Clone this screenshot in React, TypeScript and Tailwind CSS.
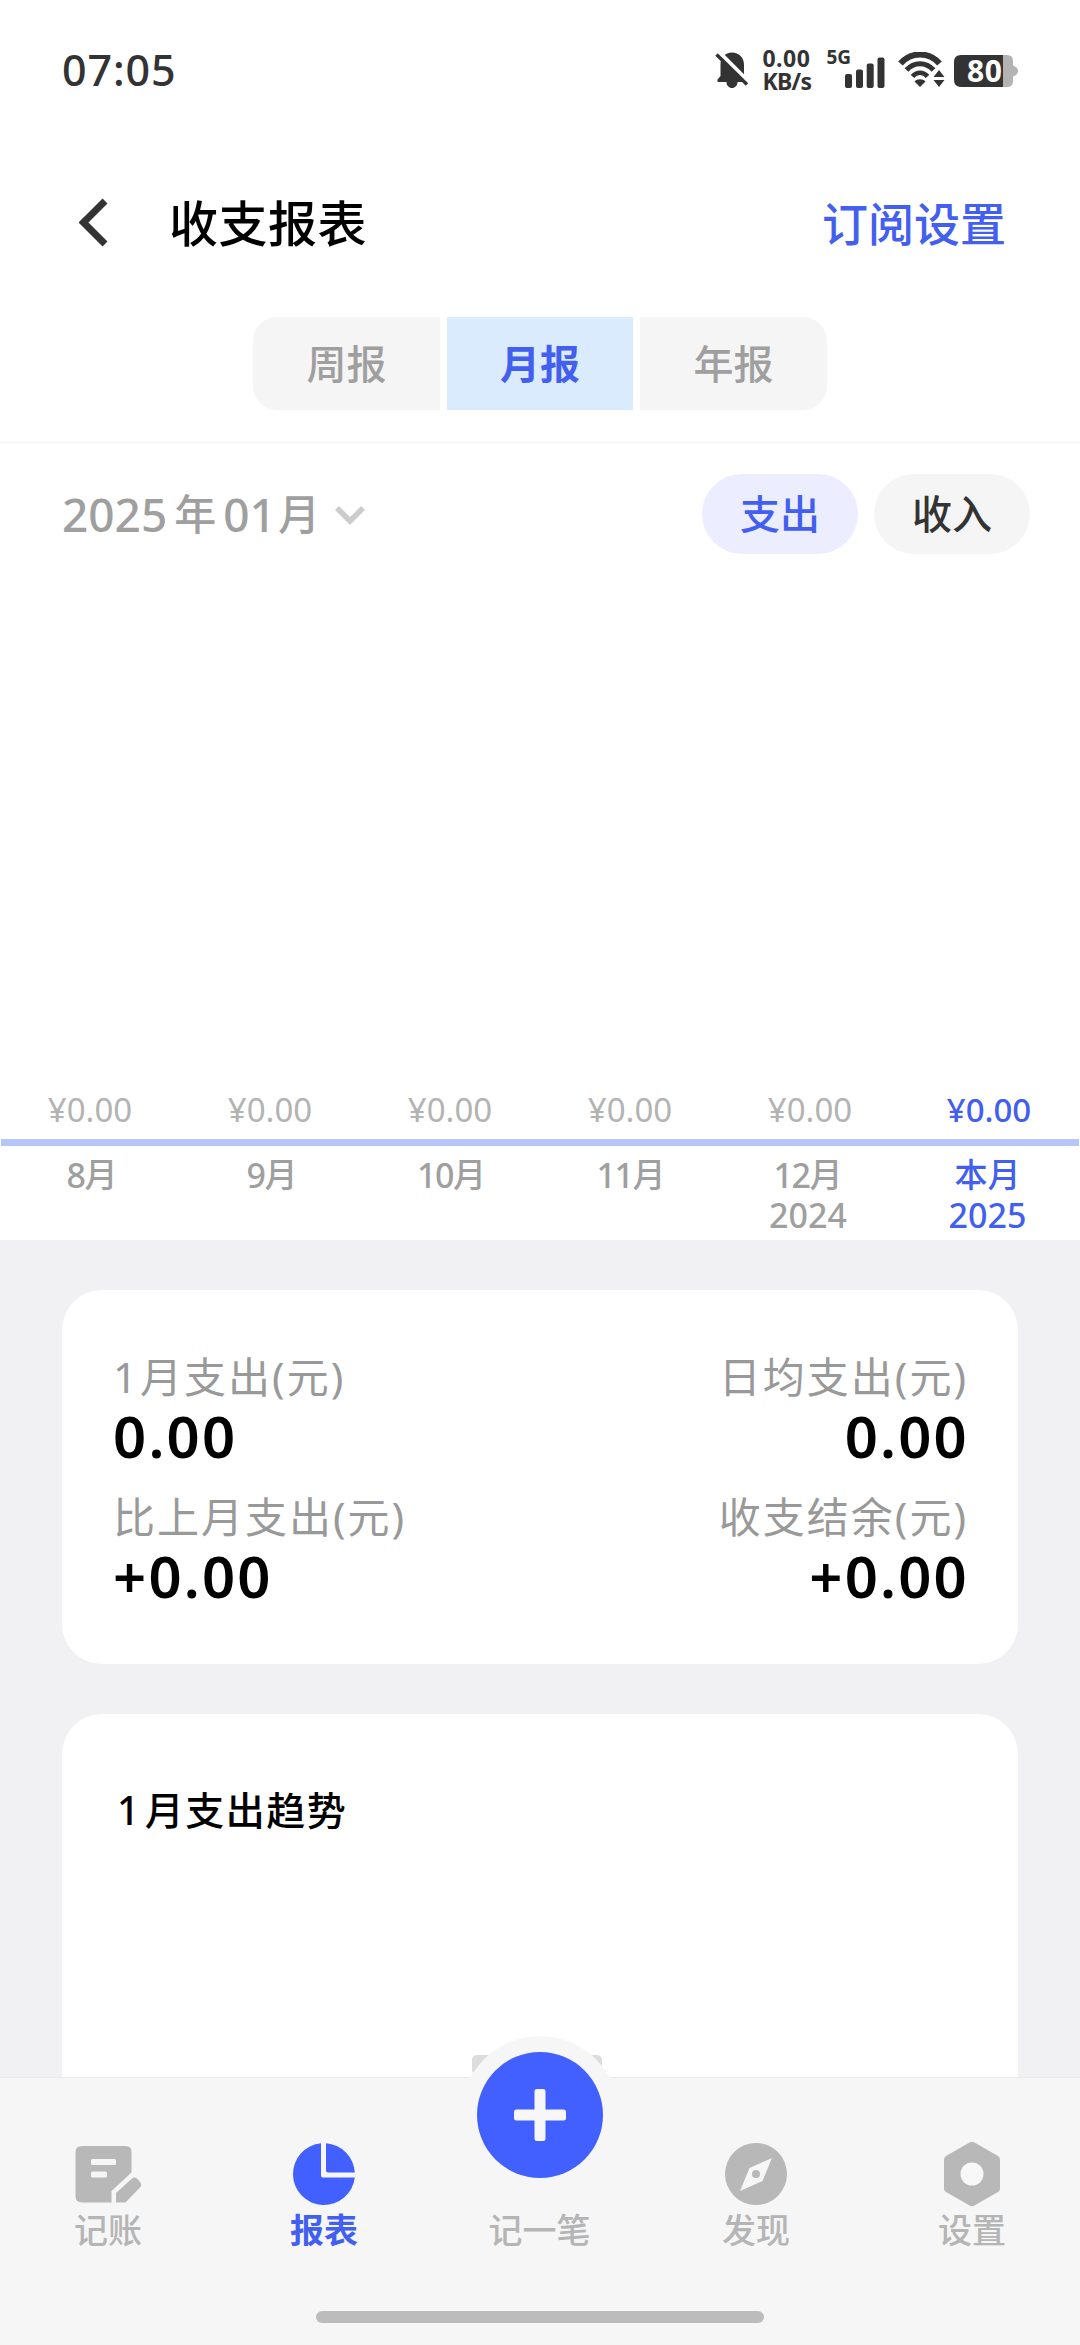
import React from 'react';

const months = [
  { num: '8', unit: '月', year: '', shift: 'pl-[4px]' },
  { num: '9', unit: '月', year: '', shift: 'pl-[4px]' },
  { num: '10', unit: '月', year: '', shift: 'pl-[3px]' },
  { num: '11', unit: '月', year: '', shift: 'pl-[2px]' },
  { num: '12', unit: '月', year: '2024', shift: 'pr-[4px]' },
  { num: '', unit: '本月', year: '2025', shift: 'pr-[5px]' },
];

function StatusBar() {
  return (
    <div className="flex h-[140px] items-center justify-between pl-[62px] pr-[61px] text-[#333]">
      <div className="text-[43px] font-medium leading-[60px] tracking-[0.9px]">07:05</div>
      <div className="flex h-[40px]">
        <svg className="mt-[1px] h-[38px] w-[34px]" viewBox="0 0 34 38" fill="none">
          <path d="M17 1.5C24 1.5 29 6.5 29 13.5V25L32 28.5V31H22.5C22.5 34.5 20 37 17 37C14 37 11.5 34.5 11.5 31H2.500V28.500L5.500 25V13.500C5.500 6.500 10 1.500 17 1.500Z" fill="#333" />
          <path d="M3 0L35 32" stroke="#fff" strokeWidth="4" />
          <path d="M1.500 3.500L32 33.500" stroke="#333" strokeWidth="3.400" />
        </svg>
        <div className="-mt-[3px] ml-[13px] w-[51px] text-[23px] font-bold leading-[23px]">
          <div className="tracking-[0.5px]">0.00</div>
          <div className="tracking-[-0.7px]">KB/s</div>
        </div>
        <div className="-mt-[1px] ml-[13px] text-[19px] font-bold leading-[16px]">5G</div>
        <svg className="-ml-[6px] mt-[7px] h-[33px] w-[40px]" viewBox="0 0 40 33" fill="#333">
          <rect x="0" y="17" width="7" height="14" rx="2" />
          <rect x="11" y="12.500" width="7" height="18.500" rx="2" />
          <rect x="21.700" y="6.500" width="7" height="24.500" rx="2" />
          <rect x="32.500" y="0.500" width="7" height="30.500" rx="2" />
        </svg>
        <svg className="ml-[13px] mt-[2px] h-[36px] w-[48px]" viewBox="0 0 48 36" fill="none" stroke="#333">
          <path d="M2.500 11.500C13 -0.500 31 -0.500 41.500 11.500" strokeWidth="6" />
          <path d="M8.500 18C16 9.500 28 9.500 35.500 18" strokeWidth="5" />
          <path d="M14.500 24.500C18.500 19.500 25.500 19.500 29.500 24.500" strokeWidth="4.500" />
          <path d="M16.500 29.500C19 26.500 25 26.500 27.500 29.500L22 35Z" fill="#333" stroke="none" />
          <path d="M41 18L46.500 25H35.500Z M41 35L46.500 28H35.500Z" fill="#333" stroke="none" />
        </svg>
        <div className="relative ml-[8px] mt-[5px] h-[32px] w-[65px]">
          <svg className="h-[32px] w-[65px]" viewBox="0 0 65 32">
            <path d="M49 0H53Q59 0 59 6V9.500Q59 10.500 60 11Q64 12.500 64 16Q64 19.500 60 21Q59 21.500 59 22.500V26Q59 32 53 32H49Z" fill="#b3b3b3" />
            <path d="M7 0H49V32H7Q0 32 0 25V7Q0 0 7 0Z" fill="#333" />
          </svg>
          <span className="absolute left-[13px] top-0 text-[30px] font-bold leading-[31px] tracking-[0.5px] text-white">80</span>
        </div>
      </div>
    </div>
  );
}

function Header() {
  return (
    <header className="flex h-[166px] items-center pl-[79px] pr-[74px]">
      <svg className="h-[50px] w-[30px]" viewBox="0 0 30 50" fill="none">
        <path d="M26 3L4.500 24.500L26 46" stroke="#333" strokeWidth="7" />
      </svg>
      <h1 className="ml-[60px] text-[49px] font-medium leading-[60px] tracking-[0.5px] text-black">收支报表</h1>
      <div className="ml-auto text-[46px] font-medium leading-[60px] text-[#435ff0]">订阅设置</div>
    </header>
  );
}

function Segments() {
  return (
    <div className="mt-[11px] flex h-[93px] justify-center gap-[7px] text-[40px] font-medium leading-[93px] text-[#9f9f9f]">
      <div className="w-[187px] rounded-l-[24px] bg-[#f5f5f5] text-center">周报</div>
      <div className="w-[186px] bg-[#dbebfe] text-center font-bold text-[#435ff0]">月报</div>
      <div className="w-[187px] rounded-r-[24px] bg-[#f5f5f5] text-center">年报</div>
    </div>
  );
}

function Filters() {
  return (
    <div className="mt-[30px] flex h-[80px] items-center pl-[62px] pr-[50px]">
      <div className="flex items-center font-medium leading-[60px] text-[#9f9f9f]">
        <span className="text-[46px]">2025</span>
        <span className="ml-[7px] text-[42px]">年</span>
        <span className="ml-[7px] text-[46px]">01</span>
        <span className="ml-[2px] text-[42px]">月</span>
      </div>
      <svg className="ml-[14px] mt-[4px] h-[22px] w-[32px]" viewBox="0 0 32 22" fill="none">
        <path d="M3 3L16 16L29 3" stroke="#cccccc" strokeWidth="5.500" />
      </svg>
      <div className="ml-auto flex gap-[16px] text-center text-[40px] font-medium leading-[80px]">
        <div className="w-[156px] rounded-full bg-[#ecedff] text-[#435ff0]">支出</div>
        <div className="w-[156px] rounded-full bg-[#f5f5f5] text-[#333]">收入</div>
      </div>
    </div>
  );
}

function Chart() {
  return (
    <div className="flex h-[686px] flex-col justify-end pb-[5px]">
      <div className="grid grid-cols-6 text-center text-[33px] leading-[40px] text-[#b3b3b3]">
        {months.map((m, i) => (
          <div key={i} className={i === 5 ? 'pr-[2px] font-medium text-[#435ff0]' : ''}>¥0.00</div>
        ))}
      </div>
      <div className="mx-[1px] mt-[9px] h-[7px] bg-[#b6c5fa]" />
      <div className="mt-[9px] grid grid-cols-6 text-center font-medium leading-[40px] text-[#9f9f9f]">
        {months.map((m, i) => (
          <div key={i} className={i === 5 ? 'h-[80px] text-[#435ff0]' : 'h-[80px]'}>
            <div className={m.shift}>
              <div className="flex justify-center">
                <span className="text-[34px] tracking-[-1.5px]">{m.num}</span>
                <span className="text-[33px]">{m.unit}</span>
              </div>
              <div className="text-[34px]">{m.year}</div>
            </div>
          </div>
        ))}
      </div>
    </div>
  );
}

function Stat({ num, label, value, right = false }: { num?: string; label: string; value: string; right?: boolean }) {
  return (
    <div className={right ? 'text-right' : ''}>
      <div className={right ? '-mr-[1px] text-[42px] leading-[60px] tracking-[2px] text-[#999]' : 'text-[42px] leading-[60px] tracking-[2px] text-[#999]'}>
        {num && <span className="mr-[1px]">{num}</span>}
        {label}
      </div>
      <div className={right ? '-mr-[2px] text-[58px] font-semibold leading-[58px] tracking-[2.200px] text-black' : 'text-[58px] font-semibold leading-[58px] tracking-[2.200px] text-black'}>
        {value}
      </div>
    </div>
  );
}

const navColor = '#b8b8b8';

function Nav() {
  return (
    <nav className="relative z-10 h-[268px] shrink-0 border-t border-[#ebebeb] bg-[#f6f6f6]">
      <div className="absolute -top-[23px] left-[472px] -z-10 h-[20px] w-[130px] rounded-[5px] bg-[#dcdcdc]" />
      <div className="absolute -top-[42px] left-[461px] flex h-[158px] w-[158px] items-center justify-center rounded-full bg-[#f6f6f6]">
        <div className="flex h-[126px] w-[126px] items-center justify-center rounded-full bg-[#4160ff]">
          <svg className="h-[52px] w-[52px]" viewBox="0 0 52 52" fill="#f7f7f7">
            <rect x="0" y="20.500" width="52" height="11" rx="2.500" />
            <rect x="20.500" y="0" width="11" height="52" rx="2.500" />
          </svg>
        </div>
      </div>
      <div className="relative grid grid-cols-5 pt-[62px] text-center text-[34px] font-medium leading-[44px] text-[#b5b5b5]">
        <div>
          <svg className="mx-auto h-[68px] w-[68px]" viewBox="0 0 68 68" fill={navColor}>
            <path d="M8 6H52Q57.500 6 57.500 12V32.500L37.500 51V62.500H8Q1.500 62.500 1.500 56V12Q1.500 6 8 6Z" />
            <path d="M42 62.500V53L58 38.500Q60.500 36.500 63 38.500L66 42Q68.500 45 66 47.500L51.500 62.500Z" />
            <rect x="17" y="19" width="25" height="6" rx="1.500" fill="#f6f6f6" />
            <rect x="17" y="31.500" width="16" height="6" rx="1.500" fill="#f6f6f6" />
          </svg>
          <div>记账</div>
        </div>
        <div className="font-bold text-[#435ff0]">
          <svg className="mx-auto h-[68px] w-[68px]" viewBox="0 0 68 68" fill="#4160ff">
            <path d="M31 3.200V35.500Q31 37.500 33 37.500H64.800A31 31 0 1 1 31 3.200Z" />
            <path d="M36 3.200A31 31 0 0 1 64.800 32.500H38Q36 32.500 36 30.500Z" />
          </svg>
          <div>报表</div>
        </div>
        <div className="pr-[1px] pt-[68px]">记一笔</div>
        <div>
          <svg className="mx-auto h-[68px] w-[68px]" viewBox="0 0 68 68" fill={navColor}>
            <circle cx="34" cy="34" r="31" />
            <path d="M50 18L40.500 41L18 51L27.500 28Z" fill="#f6f6f6" />
            <circle cx="34" cy="34" r="4" />
          </svg>
          <div>发现</div>
        </div>
        <div>
          <svg className="mx-auto h-[68px] w-[68px]" viewBox="0 0 68 68" fill={navColor}>
            <path d="M31.500 2.500Q34 1 36.500 2.500L60 16Q62 17.200 62 19.500V48.500Q62 50.800 60 52L36.500 65.500Q34 67 31.500 65.500L8 52Q6 50.800 6 48.500V19.500Q6 17.200 8 16Z" />
            <circle cx="34" cy="34" r="11.500" fill="#f8f8f8" />
          </svg>
          <div>设置</div>
        </div>
      </div>
      <div className="mx-auto mt-[59px] h-[12px] w-[448px] rounded-full bg-[#bcbcbc]" />
    </nav>
  );
}

export default function App() {
  return (
    <div className="flex h-[2345px] w-[1080px] flex-col overflow-hidden bg-[#f1f1f3] font-['Noto_Sans','Noto_Sans_CJK_SC',sans-serif]">
      <div className="flex min-h-0 flex-1 flex-col overflow-hidden">
        <div className="shrink-0 bg-white">
          <StatusBar />
          <Header />
          <Segments />
          <div className="mt-[31px] h-[3px] bg-[#f8f8f8]" />
          <Filters />
          <Chart />
        </div>
        <section className="mx-[62px] mt-[50px] grid h-[374px] shrink-0 grid-cols-2 content-start gap-y-[22px] rounded-[40px] bg-white px-[51px] pt-[57px]">
          <Stat num="1" label="月支出(元)" value="0.00" />
          <Stat label="日均支出(元)" value="0.00" right />
          <Stat label="比上月支出(元)" value="+0.00" />
          <Stat label="收支结余(元)" value="+0.00" right />
        </section>
        <section className="mx-[62px] mt-[50px] h-[420px] shrink-0 rounded-[40px] bg-white px-[55px] pt-[66px]">
          <h2 className="text-[39px] font-medium leading-[60px] tracking-[1.500px] text-black">
            <span className="mr-[4px]">1</span>月支出趋势
          </h2>
        </section>
      </div>
      <Nav />
    </div>
  );
}
